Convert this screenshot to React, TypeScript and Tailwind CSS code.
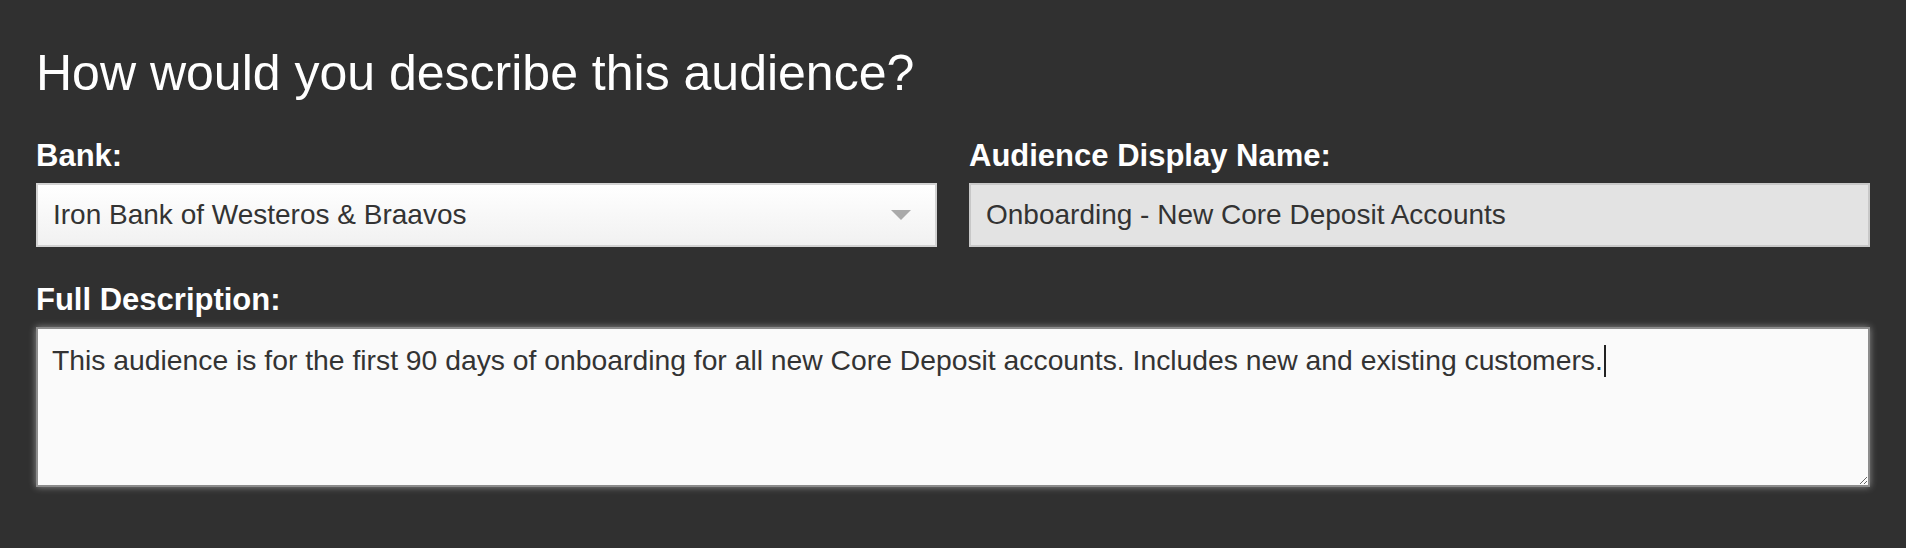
import React from "react";

const font = { fontFamily: '"Liberation Sans", Arial, Helvetica, sans-serif' };

function Label({ children, className = "" }: { children: React.ReactNode; className?: string }) {
    return <div className={`text-[31px] leading-[36px] font-bold text-white ${className}`}>{children}</div>;
}

export default function App() {
    return (
        <div className="min-h-screen bg-[#303030] px-[36px] pt-[43px] pb-10" style={font}>
            <h1 className="text-[50px] leading-[60px] font-light text-white mb-[35px]">How would you describe this audience?</h1>

            <div className="grid grid-cols-2 gap-[32px]">
                <div>
                    <Label className="mb-[9px]">Bank:</Label>
                    <div className="h-[64px] flex items-center justify-between border-2 border-[#d2d2d2] bg-gradient-to-b from-[#ffffff] to-[#f1f1f1] pl-[15px] pr-[24px] text-[28px] leading-[34px] text-[#333]">
                        <span>Iron Bank of Westeros &amp; Braavos</span>
                        <svg width="20" height="10" viewBox="0 0 20 10" className="shrink-0">
                            <path d="M0 0 L20 0 L10 10 Z" fill="#aaaaaa" />
                        </svg>
                    </div>
                </div>
                <div>
                    <Label className="mb-[9px]">Audience Display Name:</Label>
                    <div className="h-[64px] flex items-center border-2 border-[#c8c8c8] bg-[#e3e3e3] px-[15px] text-[28px] leading-[34px] text-[#333]">
                        Onboarding - New Core Deposit Accounts
                    </div>
                </div>
            </div>

            <div className="mt-[35px]">
                <Label className="mb-[9px]">Full Description:</Label>
                <div
                    role="textbox"
                    className="h-[160px] resize overflow-auto border-2 border-[#8c8c8c] bg-[#fafafa] px-[14px] pt-[14px] text-[28.3px] leading-[34px] text-[#333] shadow-[0_0_7px_rgba(255,255,255,0.45)]"
                >
                    This audience is for the first 90 days of onboarding for all new Core Deposit accounts. Includes new and existing customers.
                    <span className="inline-block w-[2px] h-[32px] bg-[#222] align-[-7px] ml-[1px]" />
                </div>
            </div>
        </div>
    );
}
